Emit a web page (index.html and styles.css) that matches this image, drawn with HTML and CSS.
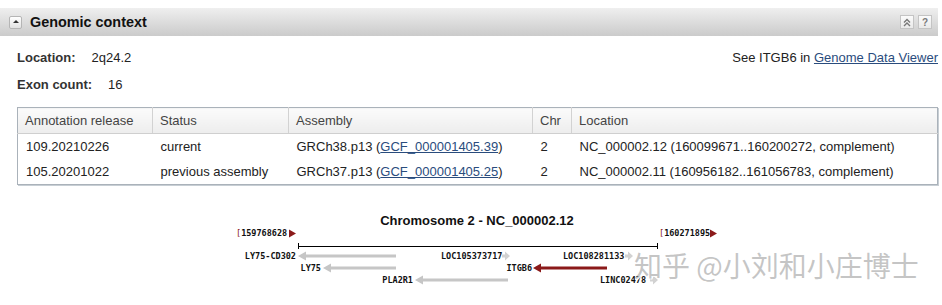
FILE: index.html
```html
<!DOCTYPE html>
<html lang="en">
<head>
    <meta charset="UTF-8">
    <meta name="viewport" content="width=device-width, initial-scale=1.0">
    <title>Genomic context</title>
    <link rel="stylesheet" href="styles.css">
</head>
<body>
    <div class="section">
        <div class="section-head">
            <span class="toggle"><span class="toggle-arrow"></span></span>
            <h2>Genomic context</h2>
            <span class="head-tools">
                <span class="tool-btn">
                    <svg width="8" height="9" viewBox="0 0 8 9">
                        <path d="M1 4.5 L4 1.5 L7 4.5 M1 8 L4 5 L7 8" fill="none" stroke="#777" stroke-width="1.4"/>
                    </svg>
                </span>
                <span class="tool-btn help">?</span>
            </span>
        </div>

        <div class="section-body">
            <div class="summary">
                <dl class="facts">
                    <div class="fact"><dt>Location:</dt><dd>2q24.2</dd></div>
                    <div class="fact"><dt>Exon count:</dt><dd>16</dd></div>
                </dl>
                <p class="gdv">See ITGB6 in <a href="#">Genome Data Viewer</a></p>
            </div>

            <table class="releases">
                <colgroup>
                    <col class="c-release">
                    <col class="c-status">
                    <col class="c-assembly">
                    <col class="c-chr">
                    <col class="c-location">
                </colgroup>
                <thead>
                    <tr>
                        <th>Annotation release</th>
                        <th>Status</th>
                        <th>Assembly</th>
                        <th>Chr</th>
                        <th>Location</th>
                    </tr>
                </thead>
                <tbody>
                    <tr>
                        <td>109.20210226</td>
                        <td>current</td>
                        <td>GRCh38.p13 (<a href="#">GCF_000001405.39</a>)</td>
                        <td>2</td>
                        <td>NC_000002.12 (160099671..160200272, complement)</td>
                    </tr>
                    <tr>
                        <td>105.20201022</td>
                        <td>previous assembly</td>
                        <td>GRCh37.p13 (<a href="#">GCF_000001405.25</a>)</td>
                        <td>2</td>
                        <td>NC_000002.11 (160956182..161056783, complement)</td>
                    </tr>
                </tbody>
            </table>

            <div class="chrom-map">
                <svg class="chrom-svg" width="942" height="105" viewBox="0 0 942 105">
                    <text class="chrom-title" x="477" y="25" text-anchor="middle">Chromosome 2 - NC_000002.12</text>

                    <!-- range ends -->
                    <text class="coord" x="236" y="36"><tspan class="bracket">[</tspan>159768628</text>
                    <polygon class="range-mark" points="289,29.5 296,33.5 289,37.5"/>
                    <text class="coord" x="659" y="36"><tspan class="bracket">[</tspan>160271895</text>
                    <polygon class="range-mark" points="710,29.5 717,33.5 710,37.5"/>

                    <!-- axis -->
                    <line class="axis" x1="298" y1="46.5" x2="658" y2="46.5"/>
                    <line class="axis" x1="298.5" y1="43" x2="298.5" y2="49"/>
                    <line class="axis" x1="657.5" y1="43" x2="657.5" y2="49"/>

                    <!-- genes -->
                    <text class="gene" x="296" y="59" text-anchor="end">LY75-CD302</text>
                    <polygon class="gene-arrow" points="298,56 306,51.5 306,54.5 396,54.5 396,57.5 306,57.5 306,60.5"/>

                    <text class="gene" x="321" y="71" text-anchor="end">LY75</text>
                    <polygon class="gene-arrow" points="323,68 331,63.5 331,66.5 396,66.5 396,69.5 331,69.5 331,72.5"/>

                    <text class="gene" x="413" y="83" text-anchor="end">PLA2R1</text>
                    <polygon class="gene-arrow" points="415,80 423,75.5 423,78.5 508,78.5 508,81.5 423,81.5 423,84.5"/>

                    <text class="gene" x="441" y="59">LOC105373717</text>
                    <polygon class="gene-arrow faint" points="502,54.5 505,54.5 505,51.5 510,56 505,60.5 505,57.5 502,57.5"/>

                    <text class="gene" x="532" y="71" text-anchor="end">ITGB6</text>
                    <polygon class="gene-arrow current" points="533,68 541,63.5 541,66.5 607,66.5 607,69.5 541,69.5 541,72.5"/>

                    <text class="gene" x="563" y="59">LOC108281133</text>
                    <polygon class="gene-arrow faint" points="625,54.5 628,54.5 628,51.5 633,56 628,60.5 628,57.5 625,57.5"/>

                    <text class="gene" x="600" y="83">LINC02478</text>
                    <polygon class="gene-arrow faint" points="650,78.5 653,78.5 653,75.5 658,80 653,84.5 653,81.5 650,81.5"/>
                </svg>
                <div class="watermark">知乎 @小刘和小庄博士</div>
            </div>
        </div>
    </div>
</body>
</html>
```

FILE: styles.css
```css
body {
    margin: 0;
    font-family: 'Liberation Sans', Arial, sans-serif;
    font-size: 13px;
    color: #222;
    background-color: #fff;
}

.section {
    width: 938px;
    padding-top: 8px;
}

.section-head {
    display: flex;
    align-items: center;
    height: 28px;
    padding: 0 6px 0 9px;
    background: linear-gradient(#efefef, #d9d9d9 60%, #cbcbcb);
}

.toggle {
    display: flex;
    align-items: center;
    justify-content: center;
    width: 11px;
    height: 11px;
    border: 1px solid #b5b5b5;
    border-radius: 2px;
    background: linear-gradient(#ffffff, #e2e2e2);
}

.toggle-arrow {
    width: 0;
    height: 0;
    margin-top: -2px;
    border-left: 3px solid transparent;
    border-right: 3px solid transparent;
    border-bottom: 3px solid #333;
}

h2 {
    margin: 0 0 0 8px;
    font-size: 14.4px;
    font-weight: bold;
    color: #111;
    flex: 1;
}

.head-tools {
    display: flex;
    gap: 4px;
}

.tool-btn {
    display: flex;
    align-items: center;
    justify-content: center;
    width: 12px;
    height: 12px;
    border: 1px solid #c4c4c4;
    background: linear-gradient(#fbfbfb, #e9e9e9);
}

.tool-btn.help {
    font-size: 10px;
    font-weight: bold;
    color: #7a7a7a;
}

.section-body {
    padding: 14px 0 0 17px;
}

.summary {
    display: flex;
    justify-content: space-between;
    align-items: flex-start;
}

.facts {
    margin: 0;
}

.fact {
    display: flex;
    line-height: 16px;
    margin-bottom: 11px;
}

.fact:last-child {
    margin-bottom: 0;
}

.fact dt {
    margin-right: 16px;
    font-weight: bold;
    color: #333;
}

.fact dd {
    margin: 0;
}

.gdv {
    margin: 0;
    line-height: 16px;
}

a {
    color: #2a4c7d;
}

.releases {
    margin-top: 14px;
    width: 920px;
    border-collapse: collapse;
    table-layout: fixed;
    border: 1px solid #aab2ba;
    box-shadow: 1px 1px 0 #c7ced4;
}

.c-release { width: 135px; }
.c-status { width: 136px; }
.c-assembly { width: 244px; }
.c-chr { width: 39px; }
.c-location { width: 366px; }

.releases th {
    height: 25px;
    padding: 0 7px;
    text-align: left;
    font-weight: normal;
    color: #444;
    background: linear-gradient(#fbfbfb, #ededed);
    border-bottom: 1px solid #cfcfcf;
    border-left: 1px solid #d2d2d2;
}

.releases th:first-child {
    border-left: none;
}

.releases td {
    height: 25px;
    padding: 0 8px;
    white-space: nowrap;
}

.chrom-map {
    position: relative;
    margin: 15px 0 0 -17px;
    height: 105px;
}

.chrom-svg {
    display: block;
}

.chrom-title {
    font-family: 'Liberation Sans', Arial, sans-serif;
    font-size: 13px;
    font-weight: bold;
    fill: #111;
}

.coord,
.gene {
    font-family: 'DejaVu Sans Mono', monospace;
    font-size: 8.5px;
    font-weight: bold;
    fill: #111;
}

.bracket {
    fill: #8b1a1a;
    font-weight: normal;
}

.range-mark {
    fill: #8b1a1a;
}

.axis {
    stroke: #000;
    stroke-width: 1;
}

.gene-arrow {
    fill: #c6c6c6;
}

.gene-arrow.faint {
    fill: #d2d2d2;
}

.gene-arrow.current {
    fill: #8b1a1a;
}

/* watermark stamped over the picture */
.watermark {
    position: absolute;
    left: 634px;
    top: 51px;
    font-family: 'Noto Sans CJK SC', sans-serif;
    font-size: 28px;
    line-height: 1;
    color: rgba(140, 140, 140, 0.5);
    text-shadow: 1px 1px 0 rgba(255, 255, 255, 0.9);
    white-space: nowrap;
}
```
